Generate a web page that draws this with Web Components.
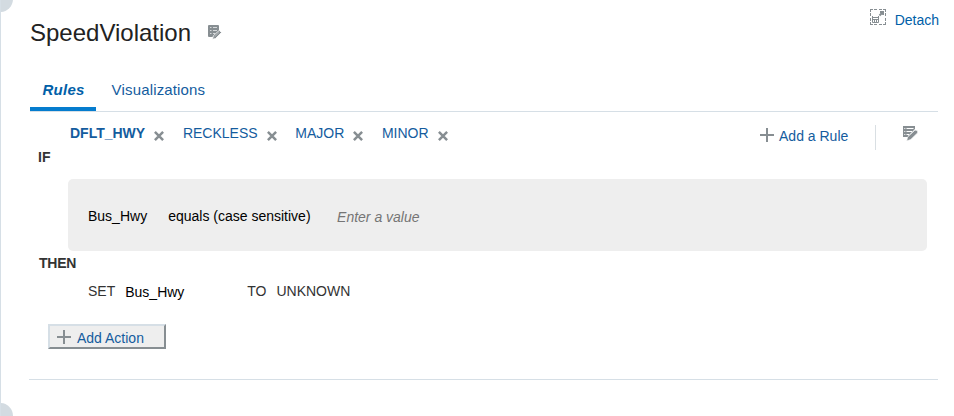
<!DOCTYPE html>
<html lang="en"><head><meta charset="utf-8"><title>SpeedViolation</title>
<style>html,body{margin:0;background:#fff}body{width:954px;height:416px;overflow:hidden;font:14px/16px "Liberation Sans",Arial,sans-serif;color:#333}</style></head>
<body><rule-editor></rule-editor>
<script>
const define=(name,html)=>customElements.define(name,class extends HTMLElement{
  constructor(){super();this.attachShadow({mode:'open'}).innerHTML=html;}
});
define('plus-icon',`<style>:host{display:block;width:14px;height:14px}svg{display:block}</style>
<svg width="14" height="14"><path d="M0 6h14v2H0zM6 0h2v14H6z" fill="#878e92"/></svg>`);
define('edit-icon',`<style>:host{display:block;width:15px;height:15px}svg{display:block;width:100%;height:100%}</style>
<svg viewBox="0 0 15 15"><path d="M0 0h12v3L5 10v1H0z" fill="#878e92"/><path d="M1.300 2.500h1M3.500 2.500h7M1.300 5.500h1M3.500 5.500h5.500M1.300 8.500h1M3.500 8.500h2.500" stroke="#fff"/><path d="M3.700 15l.8-4L11.500 4.400q1.500-1 3 .6.800 1 0 2L7.800 13.500z" fill="#878e92" stroke="#fff" stroke-width=".7"/></svg>`);
define('title-edit-icon',`<style>:host{display:block;width:14px;height:15px}svg{display:block}</style>
<svg width="14" height="15"><path d="M0 1q0-1 1-1h9q1 0 1 1v5l-6 6H1q-1 0-1-1z" fill="#878e92"/><path d="M2 2.500h1.500M5 2.500h4M2 5.500h1.500M5 5.500h4M2 8.500h1.500M5 8.500h2" stroke="#d5d8da"/><path d="M4.500 14.300l.8-3.500 6-5.500 2.200 2.200-6 6z" fill="#878e92" stroke="#fff" stroke-width=".8"/><path d="M6.500 11.800l4.800-4.600" stroke="#c9cdcf" stroke-width=".7"/></svg>`);
define('detach-icon',`<style>:host{display:block;width:16px;height:16px}svg{display:block}</style>
<svg width="16" height="16" fill="none" stroke="#878e92"><path d="M0 .5h3M4 .5h3M9 .5h3M13 .5h3M0 15.500h3M4 15.500h3M9 15.500h3M13 15.500h3M.5 0v3M.5 4v3M.5 9v3M.5 13v3M15.500 0v3M15.500 4v3M15.500 9v3M15.500 13v3"/><path d="M2.500 7v6.500h6V7M2 8.500h7M2.500 10.500h6M4.500 10v3M6.500 10v3"/><path d="M9.500 6.500l3-3" stroke-width="2"/><path d="M10 2h4v4h-1.500L10 3.500z" fill="#878e92" stroke="none"/></svg>`);
define('rule-tab',`<style>:host{display:flex;color:#145c9e}svg{display:block;margin:6px 0 0 9px}</style><slot></slot>
<svg width="10" height="10"><path d="M.9 .9l8.200 8.200M9.100 .9l-8.200 8.200" stroke="#878e92" stroke-width="2.500"/></svg>`);
define('page-tab',`<style>:host{display:block;box-sizing:border-box;height:31px;padding-top:1px;font-size:15px;line-height:17px;color:#145c9e;letter-spacing:.16px}
:host(:not([selected])){padding-left:.6px}
:host([selected]){width:66px;padding-left:12.500px;border-bottom:4px solid #057cce;color:#0060a8;font-weight:bold;font-style:italic;letter-spacing:.25px}</style><slot></slot>`);
define('condition-card',`<style>:host{display:flex;box-sizing:border-box;height:72px;margin:14px 27px 0 68px;padding:29px 20px 0;background:#eee;border-radius:5px;color:#000}</style><slot></slot>`);
define('add-action',`<style>:host{display:flex;box-sizing:border-box;width:118px;height:25px;padding:4px 0 0 7px;background:#eee;border:2px solid;border-color:#d6dfe6 #878e92 #878e92 #d6dfe6;color:#145c9e;gap:6px}</style><plus-icon></plus-icon><span><slot></slot></span>`);
define('rule-editor',`<style>
:host{display:block;position:relative;box-sizing:border-box;width:954px;height:416px;overflow:hidden;border-left:1px solid #d6dfe6;white-space:nowrap}
:host::before,:host::after{content:"";position:absolute;left:-14px;width:26px;height:26px;border-radius:50%;background:#d3dbe1}
:host::before{top:-14px}:host::after{bottom:-13px}
.wrap{margin-left:-1px;display:flow-root}
header{display:flex;height:80px;padding-left:30px}h1{margin:19px 0 0;font-size:24px;line-height:28px;font-weight:400;color:#222}
title-edit-icon{margin:25px 0 0 17px}
.detach{display:flex;margin:9px 15px 0 auto;gap:9px;color:#0060a8}.detach span{margin-top:3px}
nav{display:flex;box-sizing:border-box;height:32px;margin:0 16px 0 30px;gap:15px;border-bottom:1px solid #d6dfe6}
.rules{display:flex;height:37px;padding-left:70px}.rules rule-tab{margin-top:13px}.rules rule-tab+rule-tab{margin-left:18.700px}
.add{display:flex;margin:16px 0 0 auto;gap:5.300px;color:#145c9e}.add plus-icon{flex:none}
.bar{width:1px;height:25px;margin:13px 27px 0 26.700px;background:#d9dfe3}.rules edit-icon{margin:14px 36px 0 0}
.key{font-weight:bold;height:16px}.if{padding-left:38px}.then{padding:4px 0 0 39px;letter-spacing:-.25px}
.op{margin-left:21px}.value{margin:1px 0 0 26.500px;font-style:italic;color:#757575}
.action{display:flex;padding:12px 0 0 88px;height:17px}.field{color:#000;margin:1px 0 0 10px;width:122px}.unknown{margin-left:10px}
add-action{margin:24px 0 0 48px}.end{height:1px;background:#d6dfe6;margin:30px 16px 0 29px}
</style>
<div class="wrap"><header><h1>SpeedViolation</h1><title-edit-icon></title-edit-icon><div class="detach"><detach-icon></detach-icon><span>Detach</span></div></header>
<nav><page-tab selected>Rules</page-tab><page-tab>Visualizations</page-tab></nav>
<div class="rules"><rule-tab style="font-weight:bold">DFLT_HWY</rule-tab><rule-tab>RECKLESS</rule-tab><rule-tab>MAJOR</rule-tab><rule-tab>MINOR</rule-tab>
<div class="add"><plus-icon></plus-icon><span>Add a Rule</span></div><div class="bar"></div><edit-icon></edit-icon></div>
<div class="key if">IF</div>
<condition-card><span>Bus_Hwy</span><span class="op">equals (case sensitive)</span><span class="value">Enter a value</span></condition-card>
<div class="key then">THEN</div>
<div class="action"><span>SET</span><span class="field">Bus_Hwy</span><span>TO</span><span class="unknown">UNKNOWN</span></div>
<add-action>Add Action</add-action><div class="end"></div></div>`);
</script></body></html>
